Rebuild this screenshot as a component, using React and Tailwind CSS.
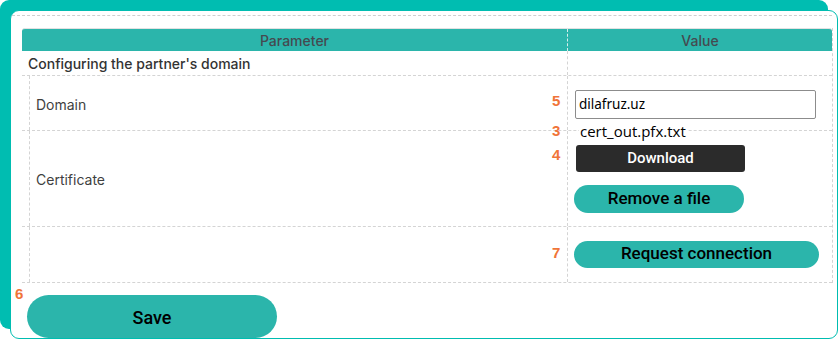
import React, { useState } from "react";

const teal = "bg-[#2bb5ab]";

const Num = ({ n, className }) => (
  <span className={"absolute text-[15px] leading-[18px] font-bold text-[#f07438] font-['Liberation_Sans',sans-serif] " + className}>
    {n}
  </span>
);

const ParamCell = ({ children }) => (
  <div className="w-[545px] shrink-0 pl-[7px] h-full">
    <div className="h-full border-l border-dashed border-[#d4d4d4] pl-[6px] pt-[2px] flex items-center text-[14px] text-[#3f3f3f] font-['Inter',sans-serif]">
      {children}
    </div>
  </div>
);

const App = () => {
  const [domain, setDomain] = useState("dilafruz.uz");

  return (
    <div className="w-[838px] h-[339px] bg-white pl-[10px] pt-[10px] overflow-hidden">
      <div className="w-[828px] h-[329px] rounded-[9px] border border-[#00bdb1] bg-white shadow-[-10px_-10px_0_0_#00bdb1]">
        <div className="mt-[4px] ml-[1px] w-[820px] border-t border-dashed border-[#cfcfcf]" />

        <div className="mt-[12px] ml-[11px] w-[811px] border-r border-dashed border-[#d4d4d4] font-['Inter',sans-serif]">
          {/* header */}
          <div className={"flex h-[23px] border-t border-[#e2e2e2] rounded-t-[3px] " + teal}>
            <div className="w-[545px] shrink-0 flex items-center justify-center text-[14px] font-medium text-[#454a50]">
              Parameter
            </div>
            <div className="flex-1 border-l border-dashed border-[#d8efed] flex items-center justify-center text-[14px] font-medium text-[#454a50]">
              Value
            </div>
          </div>

          {/* section title */}
          <div className="flex h-[25px] border-b border-dashed border-[#d4d4d4]">
            <div className="w-[545px] shrink-0 pl-[6px] pt-[1px] flex items-center text-[14px] font-medium text-[#333]">
              Configuring the partner's domain
            </div>
            <div className="flex-1 border-l border-dashed border-[#d4d4d4]" />
          </div>

          {/* domain */}
          <div className="flex h-[55px] border-b border-dashed border-[#d4d4d4]">
            <ParamCell>Domain</ParamCell>
            <div className="relative flex-1 border-l border-dashed border-[#d4d4d4] pl-[7px] flex items-center">
              <Num n="5" className="left-[-16px] top-[16px]" />
              <input
                value={domain}
                onChange={(e) => setDomain(e.target.value)}
                className="w-[241px] h-[29px] mt-[2px] border border-[#8c8c8c] rounded-[2px] px-[3px] text-[13.5px] text-black font-['Noto_Sans',sans-serif] outline-none"
              />
            </div>
          </div>

          {/* certificate */}
          <div className="flex h-[96px] border-b border-dashed border-[#d4d4d4]">
            <ParamCell>Certificate</ParamCell>
            <div className="relative flex-1 border-l border-dashed border-[#d4d4d4] pl-[8px] flex flex-col items-start">
              <Num n="3" className="left-[-16px] top-[-9px]" />
              <Num n="4" className="left-[-16px] top-[15px]" />
              <p className="-mt-[9px] ml-[3px] text-[15px] leading-[19px] text-black bg-white px-[1px] font-['Open_Sans',sans-serif]">
                cert_out.pfx.txt
              </p>
              <button className="mt-[4px] w-[169px] h-[27px] rounded-[3px] bg-[#2b2b2b] text-white text-[15px] font-medium font-['Roboto',sans-serif]">
                Download
              </button>
              <button className={"mt-[13px] -ml-[2px] w-[170px] h-[28px] rounded-full text-black text-[17px] font-medium font-['Roboto',sans-serif] " + teal}>
                Remove a file
              </button>
            </div>
          </div>

          {/* request */}
          <div className="flex h-[56px] border-b border-dashed border-[#d4d4d4]">
            <ParamCell />
            <div className="relative flex-1 border-l border-dashed border-[#d4d4d4] pl-[6px] flex items-center">
              <Num n="7" className="left-[-16px] top-[17px]" />
              <button className={"w-[245px] h-[27px] -mt-[1px] rounded-full text-black text-[17px] font-medium font-['Roboto',sans-serif] " + teal}>
                Request connection
              </button>
            </div>
          </div>
        </div>

        <div className="relative ml-[16px] mt-[12px] w-[250px]">
          <Num n="6" className="left-[-12px] top-[-10px]" />
          <button className={"w-[250px] h-[43px] pt-[2px] rounded-full text-black text-[18px] font-medium font-['Roboto',sans-serif] " + teal}>
            Save
          </button>
        </div>
      </div>
    </div>
  );
};

export default App;
